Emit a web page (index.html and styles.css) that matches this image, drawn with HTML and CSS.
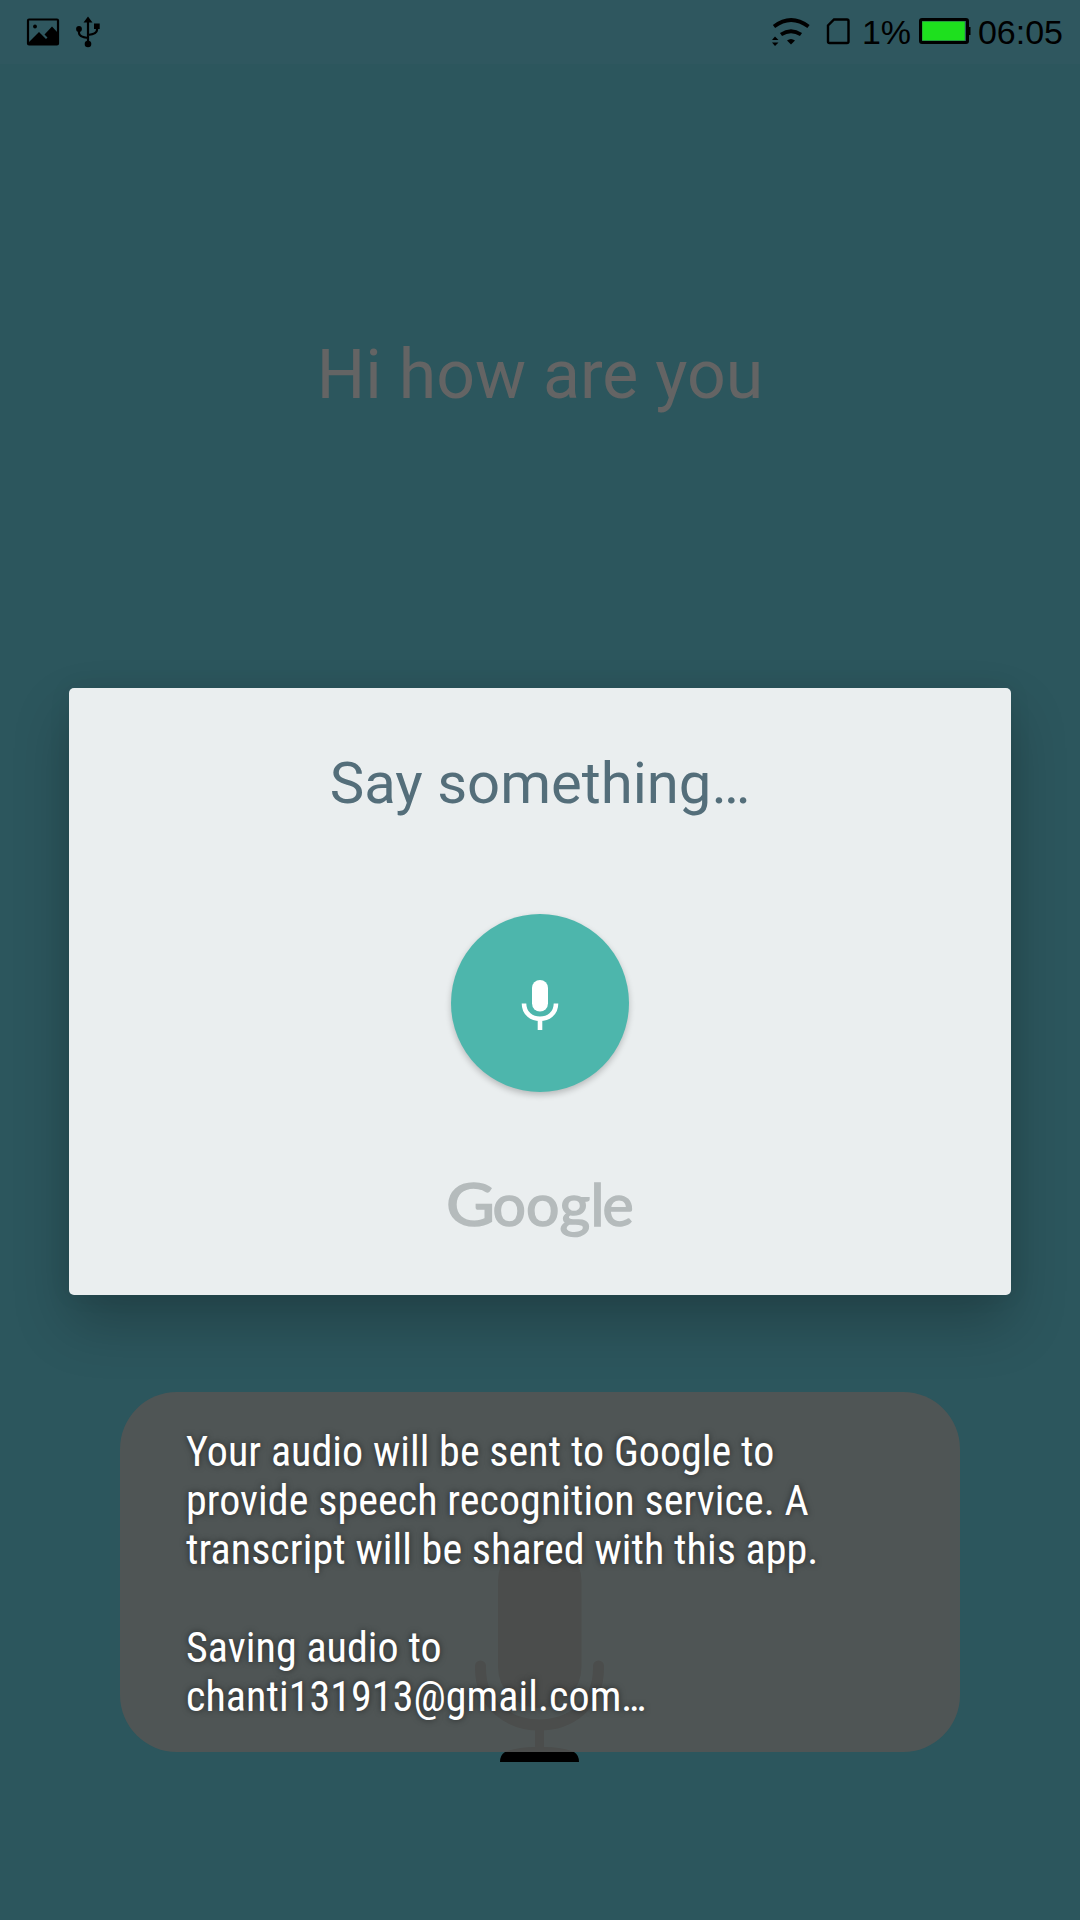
FILE: index.html
```html
<!DOCTYPE html>
<html lang="en">
<head>
<meta charset="utf-8">
<title>Speech to text</title>
<link rel="stylesheet" href="styles.css">
</head>
<body>
<main class="screen">
  <header class="status">
    <svg class="status-left" width="120" height="64" viewBox="0 0 120 64">
      <rect x="28" y="19.500" width="30" height="25" rx="1" fill="none" stroke="#000" stroke-width="2.200"/>
      <circle cx="35" cy="26.500" r="1.900"/>
      <path d="M28 43L39 32L46 39L47.500 37.500L44.500 34.500L52 26.500L58 33V45H28Z"/>
      <path d="M88 44V22M88 38Q79 37 79 33V29M88 35Q97 34 97 30V26" fill="none" stroke="#000" stroke-width="2.200"/>
      <path d="M88 16.500L92.500 22.500H83.500ZM94 23.500H99.700V29H94Z"/>
      <circle cx="88" cy="44" r="3.300"/><circle cx="79" cy="29" r="2.900"/>
    </svg>
    <div class="status-right">
      <svg width="88" height="64" viewBox="770 0 88 64">
        <path d="M774 26.500Q791 13.500 808.500 26.500M781 34.500Q791 28 801 34.500" fill="none" stroke="#000" stroke-width="3.800"/>
        <path d="M787 40.500Q791 37.500 795 40.500L791 44.500ZM772 40L775 36.500L778.500 40ZM772 42.500H778.500L775 46Z"/>
        <path d="M834 19.500H847Q848.500 19.500 848.500 21V41.500Q848.500 43 847 43H829.500Q828 43 828 41.500V25.500Z" fill="none" stroke="#000" stroke-width="2.400"/>
      </svg>
      <span class="percent">1%</span>
      <svg width="56" height="64" viewBox="916 0 56 64">
        <rect x="920.500" y="19.500" width="47" height="23" rx="1.500" fill="none" stroke="#000" stroke-width="3"/>
        <path d="M968 27H970.500V35H968Z"/>
        <rect x="922.300" y="21.500" width="42.500" height="19" fill="#1ee01e"/>
      </svg>
      <span class="clock">06:05</span>
    </div>
  </header>
  <p class="result">Hi how are you</p>
  <section class="dialog">
    <h1 class="prompt">Say something…</h1>
    <div class="mic-button">
      <svg width="40" height="54" viewBox="0 0 40 54">
        <rect x="12" y="2" width="16" height="31.500" rx="8" fill="#fff"/>
        <path d="M4 25.500C4 46 36 46 36 25.500M20 41V52" fill="none" stroke="#fff" stroke-width="4.600"/>
      </svg>
    </div>
    <svg class="logo" width="200" height="100" viewBox="440 1160 200 100">
      <text transform="translate(446 1225.500) scale(1.14 1.02)">G</text>
      <text y="1225.500" x="492.500 526 559.500 590.500 602.500">oogle</text>
    </svg>
  </section>
  <div class="toast-area">
    <svg class="big-mic" width="140" height="230" viewBox="470 1540 140 230">
      <rect x="498" y="1540" width="83.500" height="168" rx="41"/>
      <path d="M480.500 1666V1668C480.500 1744 598.500 1744 598.500 1668V1666" fill="none" stroke="#000" stroke-width="11" stroke-linecap="round"/>
      <path d="M535 1728H544V1747Q562 1747 574 1752Q579 1755 579 1762H500Q500 1755 505 1752Q517 1747 535 1747Z"/>
    </svg>
    <div class="toast">Your audio will be sent to Google to<br>provide speech recognition service. A<br>transcript will be shared with this app.<br><br>Saving audio to<br>chanti131913@gmail.com…</div>
  </div>
</main>
</body>
</html>
```
FILE: styles.css
```css
body {
  margin: 0;
  font-family: Roboto, sans-serif;
}

.screen {
  display: flex;
  flex-direction: column;
  align-items: center;
  width: 1080px;
  height: 1920px;
  overflow: hidden;
  background: #2c565d;
}

.status {
  display: flex;
  justify-content: space-between;
  width: 100%;
  height: 64px;
  background: #2f575f;
}

.status-right {
  display: flex;
  padding-right: 17px;
  font: 34px/64px "Liberation Sans", sans-serif;
}

.percent {
  width: 54px;
  padding-left: 4px;
}

.clock {
  padding-left: 6px;
}

.result {
  margin: 271px 0 0;
  font-size: 68px;
  line-height: 81px;
  color: #646464;
}

.dialog {
  display: flex;
  flex-direction: column;
  align-items: center;
  box-sizing: border-box;
  width: 942px;
  height: 607px;
  margin-top: 272px;
  padding-top: 61px;
  border-radius: 5px;
  background: #eaeeef;
  box-shadow: 0 28px 56px rgba(0, 0, 0, 0.23), 0 0 24px rgba(0, 0, 0, 0.06);
}

.prompt {
  margin: 0;
  font-size: 58px;
  font-weight: 400;
  line-height: 68px;
  color: #546e7a;
}

.mic-button {
  display: flex;
  align-items: center;
  justify-content: center;
  box-sizing: border-box;
  width: 178px;
  height: 178px;
  margin-top: 97px;
  padding-top: 3px;
  border-radius: 50%;
  background: #4db6ac;
  box-shadow: 0 3px 6px rgba(0, 0, 0, 0.22);
}

.logo {
  margin-top: 68px;
  font-family: Lato, sans-serif;
  font-size: 59px;
  font-weight: 400;
  fill: #b5bbbc;
  stroke: #b5bbbc;
  stroke-width: 1.5px;
}

.toast-area {
  position: relative;
  margin-top: 97px;
}

.big-mic {
  position: absolute;
  left: 350px;
  top: 148px;
}

.toast {
  position: relative;
  box-sizing: border-box;
  width: 840px;
  height: 360px;
  padding: 35px 0 0 66px;
  border-radius: 57px;
  background: rgba(83, 85, 84, 0.9);
  color: #fff;
  font-family: "Roboto Condensed", Roboto, sans-serif;
  font-stretch: 75%;
  font-size: 42px;
  line-height: 49px;
  letter-spacing: 0.07px;
  text-shadow: 0 0 6px rgba(0, 0, 0, 0.55);
}
```
